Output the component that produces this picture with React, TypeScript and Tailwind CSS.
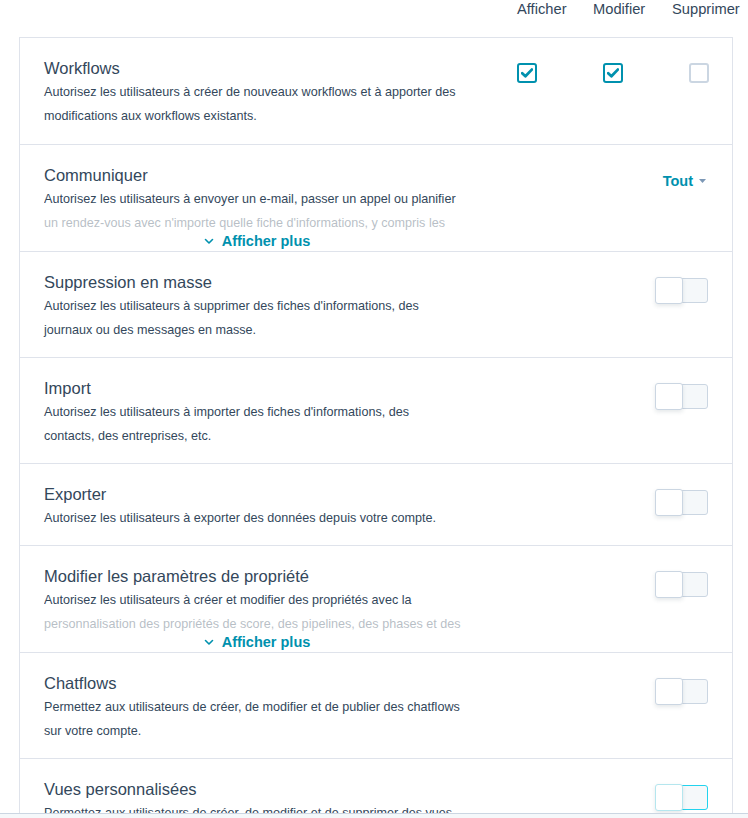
import { ReactNode } from "react";

type Control = "checks" | "tout" | "toggle" | "toggleFocus";

interface IPermissionRow {
  title: string;
  text: string;
  control: Control;
  clamped?: boolean;
  first?: boolean;
}

const rows: IPermissionRow[] = [
  {
    title: "Workflows",
    text: "Autorisez les utilisateurs à créer de nouveaux workflows et à apporter des modifications aux workflows existants.",
    control: "checks",
    first: true,
  },
  {
    title: "Communiquer",
    text: "Autorisez les utilisateurs à envoyer un e-mail, passer un appel ou planifier un rendez-vous avec n'importe quelle fiche d'informations, y compris les fiches qui ne leur sont pas attribuées.",
    control: "tout",
    clamped: true,
  },
  {
    title: "Suppression en masse",
    text: "Autorisez les utilisateurs à supprimer des fiches d'informations, des journaux ou des messages en masse.",
    control: "toggle",
  },
  {
    title: "Import",
    text: "Autorisez les utilisateurs à importer des fiches d'informations, des contacts, des entreprises, etc.",
    control: "toggle",
  },
  {
    title: "Exporter",
    text: "Autorisez les utilisateurs à exporter des données depuis votre compte.",
    control: "toggle",
  },
  {
    title: "Modifier les paramètres de propriété",
    text: "Autorisez les utilisateurs à créer et modifier des propriétés avec la personnalisation des propriétés de score, des pipelines, des phases et des statuts de ticket.",
    control: "toggle",
    clamped: true,
  },
  {
    title: "Chatflows",
    text: "Permettez aux utilisateurs de créer, de modifier et de publier des chatflows sur votre compte.",
    control: "toggle",
  },
  {
    title: "Vues personnalisées",
    text: "Permettez aux utilisateurs de créer, de modifier et de supprimer des vues personnalisées pour tous les utilisateurs.",
    control: "toggleFocus",
  },
];

const CheckBox = ({ checked }: { checked: boolean }) => (
  <span
    className={`flex h-[20px] w-[20px] items-center justify-center rounded-[3px] border-2 bg-white ${
      checked ? "border-[#0091ae]" : "border-[#cbd6e2]"
    }`}
  >
    {checked && (
      <svg width="12" height="10" viewBox="0 0 12 10">
        <path
          d="M1.2 5.2 L4.4 8.2 L10.8 1.6"
          fill="none"
          stroke="#0091ae"
          strokeWidth="2.8"
          strokeLinecap="round"
          strokeLinejoin="round"
        />
      </svg>
    )}
  </span>
);

const Toggle = ({ focus }: { focus?: boolean }) => (
  <div className="flex items-center">
    <span
      className={`relative z-10 h-[27px] w-[28px] rounded-[3px] border bg-white shadow-[0_2px_4px_rgba(45,62,80,0.12)] ${
        focus ? "border-[#b5e6ee]" : "border-[#cbd6e2]"
      }`}
    />
    <span
      className={`-ml-[2px] h-[25px] w-[27px] rounded-r-[3px] border bg-[#f5f8fa] ${
        focus ? "border-[#22d3ee]" : "border-[#cbd6e2]"
      }`}
    />
  </div>
);

const renderControl = (control: Control): ReactNode => {
  switch (control) {
    case "checks":
      return (
        <div className="mt-[25px] mr-[-1px] flex gap-[66px] self-start">
          <CheckBox checked />
          <CheckBox checked />
          <CheckBox checked={false} />
        </div>
      );
    case "tout":
      return (
        <button className="mt-[27px] mr-[2px] flex items-center gap-[6px] self-start text-[14.5px] font-bold leading-[18px] text-[#0091ae]">
          Tout
          <svg width="7" height="4" viewBox="0 0 7 4">
            <path d="M0 0 L7 0 L3.5 4 Z" fill="#7c98b6" />
          </svg>
        </button>
      );
    default:
      return (
        <div className="mt-[25px] self-start">
          <Toggle focus={control === "toggleFocus"} />
        </div>
      );
  }
};

const PermissionRow = ({ title, text, control, clamped, first }: IPermissionRow) => (
  <div className="flex justify-between border-b border-[#dfe3eb] pl-[24px] pr-[24px]">
    <div
      className={`w-[426px] pt-[18px] ${
        clamped ? "pb-[2px]" : first ? "pb-[16px]" : "pb-[15px]"
      }`}
    >
      <h3 className="text-[16.5px] leading-[24px] text-[#33475b]">{title}</h3>
      {clamped ? (
        <>
          <div className="relative h-[46px] overflow-hidden">
            <p className="max-w-[418px] text-[12.6px] leading-[24px] text-[#33475b]">
              {text}
            </p>
            <div className="absolute inset-x-0 top-[24px] h-[22px] bg-white/65" />
          </div>
          <button className="mx-auto flex items-center gap-[8px] text-[14.5px] font-bold leading-[16px] text-[#0091ae]">
            <svg width="10" height="7" viewBox="0 0 10 7">
              <path
                d="M1.5 1.5 L5 5 L8.5 1.5"
                fill="none"
                stroke="#0091ae"
                strokeWidth="1.6"
                strokeLinecap="round"
                strokeLinejoin="round"
              />
            </svg>
            Afficher plus
          </button>
        </>
      ) : (
        <p className="max-w-[418px] text-[12.6px] leading-[24px] text-[#33475b]">
          {text}
        </p>
      )}
    </div>
    {renderControl(control)}
  </div>
);

export default function App() {
  return (
    <div className="flex h-[818px] w-[748px] flex-col overflow-hidden bg-white font-['Liberation_Sans',Arial,sans-serif]">
      <main className="min-h-0 flex-1 overflow-hidden">
        <header className="flex h-[19px] pl-[517px] text-[14.7px] leading-[19px] text-[#33475b]">
          <span className="w-[76px]">Afficher</span>
          <span className="w-[79px]">Modifier</span>
          <span>Supprimer</span>
        </header>
        <section className="ml-[19px] mt-[18px] w-[714px] border-x border-t border-[#dfe3eb]">
          {rows.map((row) => (
            <PermissionRow key={row.title} {...row} />
          ))}
        </section>
      </main>
      <footer className="h-[5px] border-t border-[#cbd6e2] bg-[#f5f8fa]" />
    </div>
  );
}
